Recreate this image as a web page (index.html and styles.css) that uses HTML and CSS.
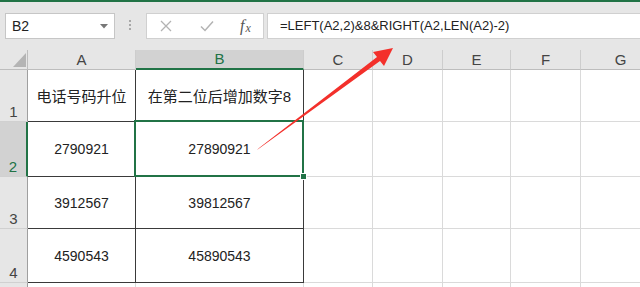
FILE: index.html
```html
<!DOCTYPE html>
<html lang="zh-CN">
<head>
    <meta charset="UTF-8">
    <meta name="viewport" content="width=device-width, initial-scale=1.0">
    <title>Excel - 电话号码升位</title>
    <link rel="stylesheet" href="styles.css">
</head>
<body>

    <div class="formula-bar">
        <div class="name-box">
            <span>B2</span>
            <svg class="drop" width="8" height="5" viewBox="0 0 8 5"><path d="M0 0h8L4 4.5z" fill="#777"/></svg>
        </div>
        <div class="grip"><i></i><i></i><i></i></div>
        <div class="fx-buttons">
            <svg class="btn" width="12" height="12" viewBox="0 0 12 12"><path d="M1 1l10 10M11 1L1 11" stroke="#b3b3b3" stroke-width="1.3" fill="none"/></svg>
            <svg class="btn" width="14" height="12" viewBox="0 0 14 12"><path d="M1 6.5l4 4L13 1.5" stroke="#b3b3b3" stroke-width="1.5" fill="none"/></svg>
            <span class="fx">f<sub>x</sub></span>
        </div>
        <div class="formula-input">=LEFT(A2,2)&amp;8&amp;RIGHT(A2,LEN(A2)-2)</div>
    </div>

    <div class="sheet">
        <table class="grid">
            <colgroup>
                <col style="width:28px">
                <col style="width:108px">
                <col style="width:168px">
                <col style="width:69px">
                <col style="width:70px">
                <col style="width:68px">
                <col style="width:70px">
                <col style="width:80px">
            </colgroup>
            <tr class="head-row">
                <th class="corner"><span class="tri"></span></th>
                <th>A</th>
                <th class="sel-col">B</th>
                <th>C</th>
                <th>D</th>
                <th>E</th>
                <th>F</th>
                <th>G</th>
            </tr>
            <tr class="r1">
                <th class="row-num">1</th>
                <td class="data title">电话号码升位</td>
                <td class="data title">在第二位后增加数字8</td>
                <td></td><td></td><td></td><td></td><td></td>
            </tr>
            <tr class="r2">
                <th class="row-num sel-row">2</th>
                <td class="data">2790921</td>
                <td class="data active">27890921</td>
                <td></td><td></td><td></td><td></td><td></td>
            </tr>
            <tr class="r3">
                <th class="row-num">3</th>
                <td class="data">3912567</td>
                <td class="data">39812567</td>
                <td></td><td></td><td></td><td></td><td></td>
            </tr>
            <tr class="r4">
                <th class="row-num">4</th>
                <td class="data">4590543</td>
                <td class="data">45890543</td>
                <td></td><td></td><td></td><td></td><td></td>
            </tr>
            <tr class="r5">
                <th class="row-num"></th>
                <td></td><td></td><td></td><td></td><td></td><td></td><td></td>
            </tr>
        </table>
    </div>

    <!-- annotation arrow drawn over the sheet -->
    <svg class="arrow" width="640" height="287" viewBox="0 0 640 287">
        <polygon points="257,150 380,61 384,66 393,48 373,52 377,57 259,148" fill="#f3302b"/>
    </svg>

</body>
</html>
```

FILE: styles.css
```css
body {
    margin: 0;
    width: 640px;
    height: 287px;
    overflow: hidden;
    position: relative;
    font-family: "Liberation Sans", "Noto Sans CJK SC", sans-serif;
    background: #fff;
}

/* formula bar */

.formula-bar {
    border-top: 2px solid #217346;
    background: #e6e6e6;
    display: flex;
    align-items: flex-start;
    padding-top: 11px;
    box-sizing: border-box;
    height: 50px;
}

.name-box {
    margin-left: 5px;
    width: 110px;
    height: 26px;
    box-sizing: border-box;
    background: #fff;
    border: 1px solid #c6c6c6;
    display: flex;
    align-items: center;
    justify-content: space-between;
    padding: 0 6px 0 6px;
    font-size: 14px;
    color: #222;
}

.name-box .drop {
    margin-top: 1px;
}

.grip {
    width: 3px;
    margin: 7px 14px 0 14px;
    display: flex;
    flex-direction: column;
    gap: 2px;
}

.grip i {
    display: block;
    width: 2px;
    height: 2px;
    background: #a8a8a8;
}

.fx-buttons {
    width: 118px;
    height: 26px;
    box-sizing: border-box;
    background: #fff;
    border: 1px solid #d0d0d0;
    display: flex;
    align-items: center;
    padding-left: 13px;
}

.fx-buttons .btn:nth-child(2) {
    margin-left: 28px;
}

.fx {
    margin-left: 26px;
    font-family: "Liberation Serif", serif;
    font-style: italic;
    font-size: 16px;
    color: #555;
}

.fx sub {
    font-size: 12px;
    vertical-align: -1px;
    margin-left: 1px;
}

.formula-input {
    margin-left: 3px;
    flex: 1;
    height: 26px;
    box-sizing: border-box;
    background: #fff;
    border: 1px solid #d0d0d0;
    border-right: none;
    padding-left: 12px;
    line-height: 24px;
    font-size: 13px;
    color: #222;
    white-space: nowrap;
}

/* sheet */

.sheet {
    overflow: hidden;
}

.grid {
    border-collapse: separate;
    border-spacing: 0;
    table-layout: fixed;
    width: 661px;
}

.grid th,
.grid td {
    padding: 0;
    border-right: 1px solid #dadada;
    border-bottom: 1px solid #dadada;
    box-sizing: border-box;
}

.head-row {
    height: 20px;
}

.head-row th {
    background: #e6e6e6;
    font-weight: normal;
    font-size: 15px;
    color: #444;
    text-align: center;
    border-right-color: #cdcdcd;
    border-bottom-color: #bdbdbd;
    line-height: 18px;
}

.head-row .corner {
    position: relative;
    border-right-color: #bdbdbd;
}

.tri {
    position: absolute;
    right: 1px;
    bottom: 2px;
    width: 0;
    height: 0;
    border-left: 13px solid transparent;
    border-bottom: 14px solid #b4b4b4;
}

.head-row .sel-col {
    background: #d2d2d2;
    color: #217346;
    border-bottom: 2px solid #217346;
}

.row-num {
    background: #e6e6e6;
    font-weight: normal;
    font-size: 15px;
    color: #444;
    text-align: center;
    vertical-align: bottom;
    padding-bottom: 1px !important;
    border-right-color: #9f9f9f !important;
    border-bottom-color: #d0d0d0 !important;
}

.row-num.sel-row {
    background: #d2d2d2;
    color: #217346;
    border-right: 2px solid #217346 !important;
}

.r1 { height: 52px; }
.r2 { height: 55px; }
.r3 { height: 52px; }
.r4 { height: 54px; }
.r5 { height: 30px; }

.data {
    text-align: center;
    font-size: 14px;
    color: #222;
    border-right-color: #3a3a3a !important;
    border-bottom-color: #3a3a3a !important;
}

.data.title {
    font-size: 15px;
}

.active {
    position: relative;
}

.active::after {
    content: "";
    position: absolute;
    top: -2px;
    left: -2px;
    right: -1px;
    bottom: -1px;
    border: 2px solid #217346;
}

.active::before {
    content: "";
    position: absolute;
    right: -4px;
    bottom: -4px;
    width: 5px;
    height: 5px;
    background: #217346;
    border: 1px solid #fff;
    z-index: 2;
}

.arrow {
    position: absolute;
    top: 0;
    left: 0;
    pointer-events: none;
}
```
